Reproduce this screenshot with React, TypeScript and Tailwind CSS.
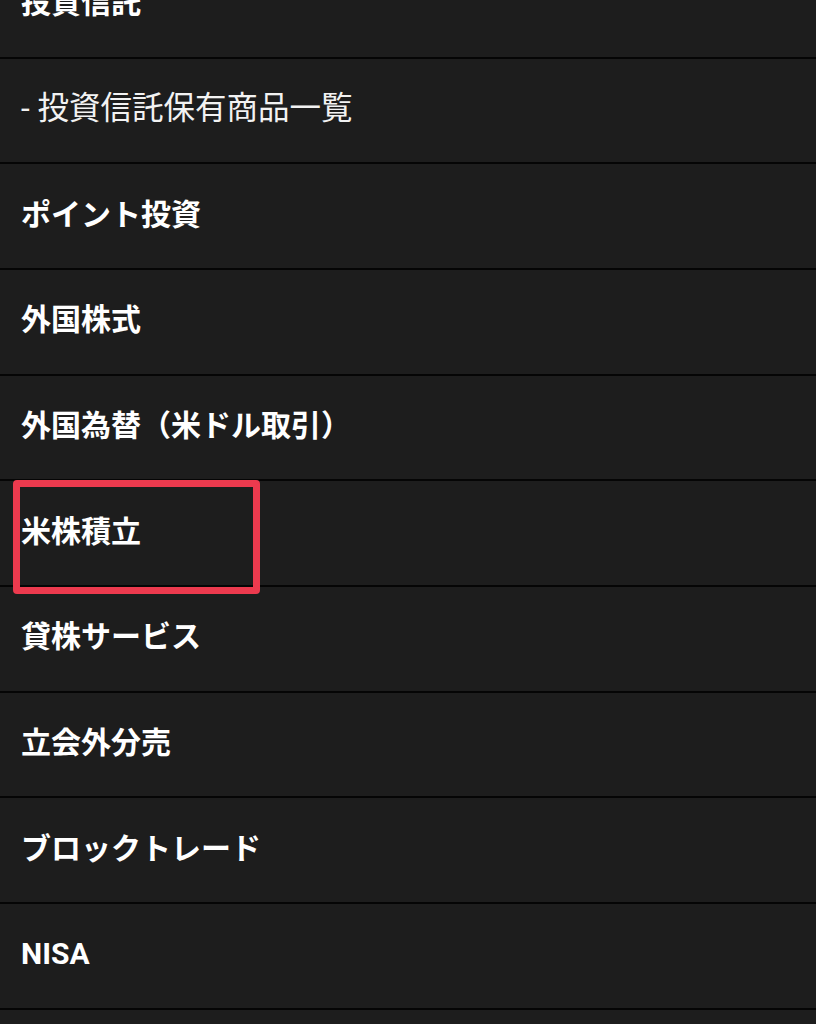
import React from 'react';

type MenuItem = {
  label: string;
  sub?: boolean;
  marked?: boolean;
};

const items: MenuItem[] = [
  { label: '投資信託' },
  { label: '- 投資信託保有商品一覧', sub: true },
  { label: 'ポイント投資' },
  { label: '外国株式' },
  { label: '外国為替（米ドル取引）' },
  { label: '米株積立', marked: true },
  { label: '貸株サービス' },
  { label: '立会外分売' },
  { label: 'ブロックトレード' },
  { label: 'NISA' },
  { label: 'iDeCo' },
];

const App: React.FC = () => {
  return (
    <div
      className="min-h-screen w-full overflow-hidden bg-[#1d1d1d]"
      style={{ fontFamily: 'Roboto, "Noto Sans CJK JP", "Noto Sans", sans-serif' }}
    >
      <ul className="-mt-[47px]">
        {items.map((item) => (
          <li
            key={item.label}
            className="relative flex h-[105.67px] items-center border-b-2 border-[#050505] bg-[#1d1d1d] pb-[3px] pl-[21px]"
          >
            <span
              className={
                item.sub
                  ? 'text-[31.5px] font-normal leading-none text-[#f2f2f2]'
                  : 'text-[30px] font-bold leading-none text-white'
              }
            >
              {item.label}
            </span>

            {/* annotation box */}
            {item.marked && (
              <div className="absolute left-[13px] top-[-1px] z-10 h-[114px] w-[247px] rounded-[4px] border-[7px] border-[#ec3a4e]" />
            )}
          </li>
        ))}
      </ul>
    </div>
  );
};

export default App;
